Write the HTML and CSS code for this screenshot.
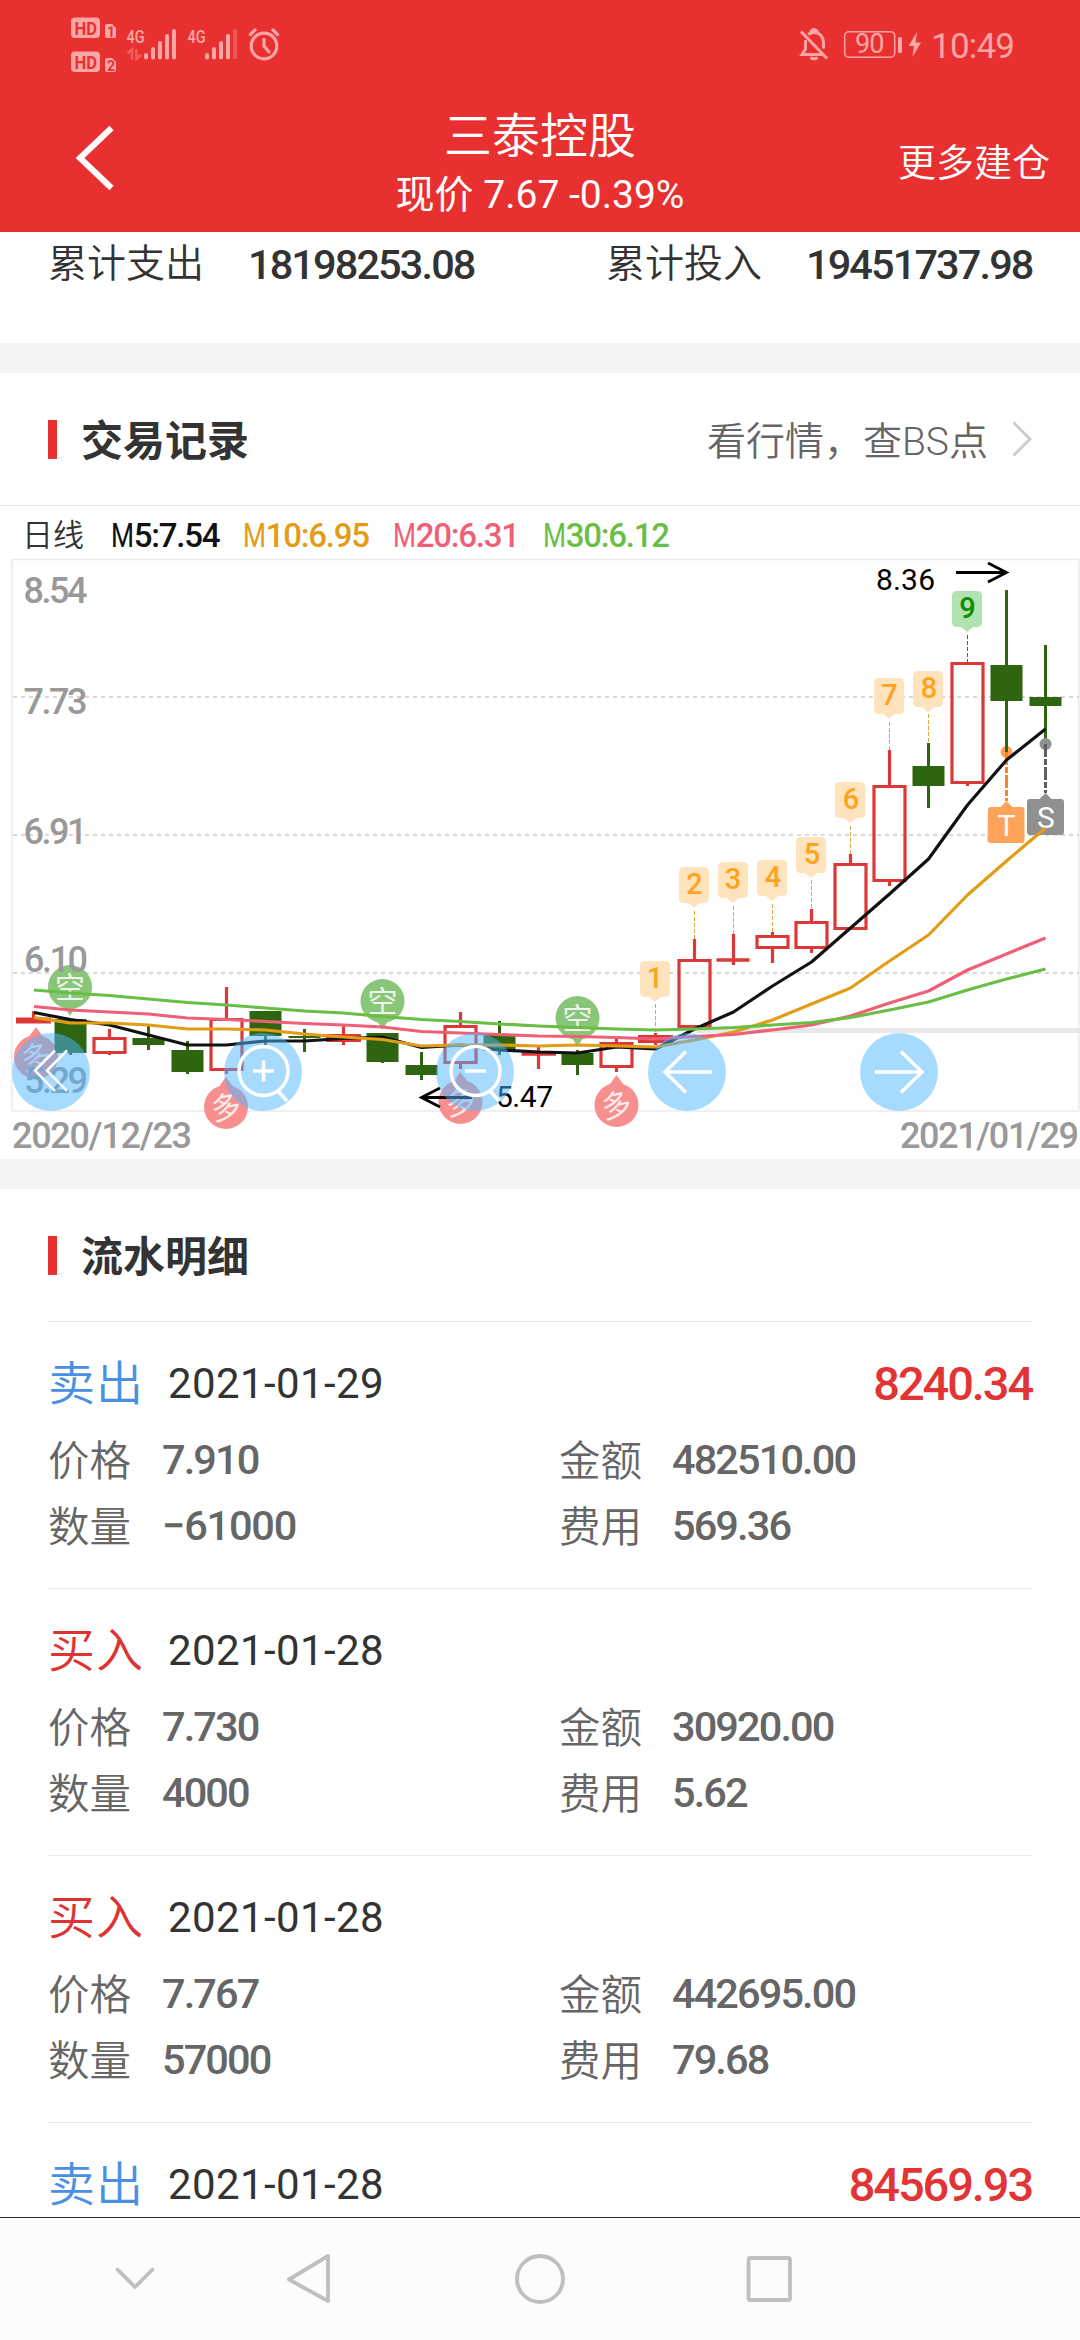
FILE: index.html
```html
<!DOCTYPE html>
<html lang="zh-CN">
<head>
<meta charset="utf-8">
<title>三泰控股</title>
<link rel="stylesheet" href="styles.css">
</head>
<body>
<div class="screen">
  <header class="header">
    <svg class="status" viewBox="0 0 1080 80" width="1080" height="80">
      <g fill="#fca5a5">
        <rect x="71" y="17.5" width="29" height="20.5" rx="4"/>
        <rect x="71" y="51.500" width="29" height="20.5" rx="4"/>
        <path d="M105 26q0-2 2-2h5l4 4v8q0 2-2 2h-7q-2 0-2-2z"/>
        <path d="M105 60q0-2 2-2h5l4 4v8q0 2-2 2h-7q-2 0-2-2z"/>
      </g>
      <g class="hd">
        <text x="74.500" y="34.500" textLength="22.500" lengthAdjust="spacingAndGlyphs">HD</text>
        <text x="74.500" y="68.500" textLength="22.500" lengthAdjust="spacingAndGlyphs">HD</text>
        <text class="sim" x="107" y="36.500">1</text>
        <text class="sim" x="107" y="70.500">2</text>
      </g>
      <g class="net">
        <text x="126.500" y="42.500" textLength="18" lengthAdjust="spacingAndGlyphs">4G</text>
        <text x="187.500" y="42.500" textLength="18" lengthAdjust="spacingAndGlyphs">4G</text>
      </g>
      <path d="M127.500 53.500l4.500-4v10M136.500 49v10l4.500-4" fill="none" stroke="#f05c5c" stroke-width="2.600"/>
      <g stroke="#fca5a5" stroke-width="4" stroke-linecap="round">
        <path d="M146 55v2.500M153 49v8.500M160 43v14.500M167 36v21.500M174 31v26.500"/>
        <path d="M207 55v2.500M214 49v8.500M221 43v14.500M228 36v21.500"/>
        <path d="M235 31v26.500" stroke="#f05858"/>
      </g>
      <g fill="none" stroke="#fca5a5" stroke-width="3.200" stroke-linecap="round">
        <circle cx="264" cy="46" r="12.800"/>
        <path d="M264 39v7l5 6M250.500 34.500l4.500-4.500M277.500 34.500l-4.500-4.500"/>
      </g>
      <g fill="none" stroke="#fca5a5" stroke-width="3">
        <path d="M801 31.500l26 27M805.500 40v9l-3.500 5.500h20M808 34.500c2-1.500 4-2 6-2 6 0 9.500 4.500 9.500 10v6M811 32.500v-1.500q3-3 6 0v1.500"/>
        <path d="M810.500 57.500q3.500 2.500 7 0" />
        <rect x="844.700" y="31.700" width="50" height="25.500" rx="4" stroke-width="1.500"/>
      </g>
      <rect x="898" y="37" width="4" height="16" rx="1.500" fill="#fca5a5"/>
      <path d="M917 32l-8.500 14h5.500l-1.500 11 8.500-14.500h-5.500z" fill="#fca5a5"/>
      <text class="batt" x="855" y="53" textLength="29.500">90</text>
      <text class="time" x="931" y="57.500" textLength="84">10:49</text>
    </svg>
    <div class="bar">
      <svg class="back" viewBox="0 0 40 66" width="40" height="66"><path d="M36.500 3L5 33l31.500 30" fill="none" stroke="#fff" stroke-width="6"/></svg>
      <div class="heading">
        <h1>三泰控股</h1>
        <p>现价 7.67 -0.39%</p>
      </div>
      <a class="more">更多建仓</a>
    </div>
  </header>

  <section class="totals">
    <span class="t-label">累计支出</span><span class="num">18198253.08</span>
    <span class="t-label second">累计投入</span><span class="num">19451737.98</span>
  </section>

  <section class="trades">
    <div class="section-head">
      <i class="mark"></i><h2>交易记录</h2>
      <span class="link">看行情，查BS点</span>
      <svg class="chev" viewBox="0 0 20 36" width="20" height="36"><path d="M1.500 1.500L18 18 1.500 34.500" fill="none" stroke="#ccc" stroke-width="3"/></svg>
    </div>
    <div class="legend">
      <span class="period">日线</span>
      <span class="m5"><i>M</i>5:7.54</span>
      <span class="m10"><i>M</i>10:6.95</span>
      <span class="m20"><i>M</i>20:6.31</span>
      <span class="m30"><i>M</i>30:6.12</span>
    </div>
    <svg class="chart" viewBox="0 558 1080 601" width="1080" height="601">
      <defs>
        <path id="tag" d="M-15-31q0-5 5-5h20q5 0 5 5v26q0 5-5 5h-4l-6 5-6-5h-4q-5 0-5-5z"/>
        <g id="short"><path d="M-6 19L0 29l6-10z"/><circle r="22"/></g>
        <g id="long"><path d="M-8-19L0-30l8 11z"/><circle r="22"/></g>
      </defs>
      <g fill="none" stroke="#ececec" stroke-width="1.600">
        <path d="M12 559.500H1079M12 1111H1079M12 559V1111M1078.800 559V1111"/>
      </g>
      <path d="M696 1030.500H1080" stroke="#e8e8e8" stroke-width="5"/>
      <path d="M13 697H1079M13 835H1079M13 973H1079" stroke="#d8d8d8" stroke-width="1.800" stroke-dasharray="4 4"/>

      <g fill="#8ac67a">
        <use href="#short" x="70" y="987"/><use href="#short" x="382.500" y="1001"/><use href="#short" x="577.500" y="1018"/>
      </g>
      <g fill="#f78f8f">
        <use href="#long" x="36" y="1057"/><use href="#long" x="226" y="1107"/><use href="#long" x="460.500" y="1102"/><use href="#long" x="616.500" y="1105"/>
      </g>
      <g class="pin">
        <text x="70" y="998">空</text><text x="382.500" y="1012">空</text><text x="577.500" y="1029">空</text>
        <text transform="translate(36 1057) rotate(-12)" y="11">多</text>
        <text transform="translate(226 1107) rotate(-12)" y="11">多</text>
        <text transform="translate(460.500 1102) rotate(-12)" y="11">多</text>
        <text transform="translate(616.500 1105) rotate(-12)" y="11">多</text>
      </g>

      <g stroke="#2f6511" stroke-width="3" fill="#2f6511">
        <path d="M70.500 1019V1055M148.500 1026V1050M187.500 1041V1074M265.500 1011V1045M304.500 1029V1052M382.500 1033V1063M421.500 1052V1080M499.500 1021V1055M577.500 1050V1075M928.500 743V808M1006.500 590V752M1045.500 645V743"/>
        <path stroke="none" d="M54.500 1019h32v34h-32zM132.500 1038h32v7h-32zM171.500 1050h32v22h-32zM249.500 1011h32v25h-32zM288.500 1036h32v2h-32zM366.500 1033h32v29h-32zM405.500 1065h32v10h-32zM483.500 1035h32v16h-32zM561.500 1053h32v12h-32zM912.500 766h32v20h-32zM990.500 665h32v36h-32zM1029.500 697h32v9h-32z"/>
      </g>
      <g stroke="#dc3838" stroke-width="3.200" fill="none">
        <path d="M33.500 1011V1020M109.500 1029V1038M109.500 1053V1055M226.500 987V1019M226.500 1071V1074M343.500 1025V1045M460.500 1012V1026M460.500 1063V1069M538.500 1047V1069M616.500 1036V1043M616.500 1068V1072M655.500 1033V1045M694.500 939V960M733.500 934V965M772.500 932V936M772.500 949V963M811.500 909V922M811.500 949V953M850.500 854V864M889.500 750V786M889.500 882V886M967.500 784V786"/>
        <path stroke-width="6" d="M16 1020.500H51"/>
        <path stroke-width="8" d="M326 1038H361M638 1039H673"/>
        <path stroke-width="3.500" d="M521.500 1054H556M716.500 960H749.500"/>
        <path d="M94 1038.500h31v14h-31zM211 1019.500h31v50h-31zM445 1026.500h31v36h-31zM601 1043.500h31v23h-31zM679 960.500h31v66h-31zM757 936.500h31v11h-31zM796 922.500h31v25h-31zM835 864.500h31v64h-31zM874 786.500h31v94h-31zM952 663.500h31v119h-31z"/>
      </g>

      <g fill="#ffe1b8" fill-opacity=".94">
        <use href="#tag" x="655" y="997"/><use href="#tag" x="694" y="903"/><use href="#tag" x="733" y="898"/><use href="#tag" x="772" y="896"/><use href="#tag" x="811" y="873"/><use href="#tag" x="850" y="818"/><use href="#tag" x="889" y="714"/><use href="#tag" x="928" y="707"/>
      </g>
      <use href="#tag" x="967" y="627" fill="#b2e1b2"/>
      <g class="count">
        <text x="655" y="988">1</text><text x="694.500" y="894">2</text><text x="733" y="889">3</text><text x="773" y="887">4</text><text x="812" y="864">5</text><text x="851" y="809">6</text><text x="889.500" y="705">7</text><text x="929" y="698">8</text><text class="nine" x="967.500" y="618">9</text>
      </g>
      <path d="M655.500 1004V1033M694.500 911V939M733.500 906V934M772.500 904V932M811.500 880V909M850.500 826V854M889.500 722V750M928.500 714V743" stroke="#dfa43a" stroke-dasharray="4 2"/>
      <path d="M967.500 635V662" stroke="#128a12" stroke-dasharray="4 2"/>

      <g>
        <circle cx="1006.500" cy="752" r="6" fill="#ffa35b"/><circle cx="1045.500" cy="744" r="6" fill="#909090"/>
        <path d="M1006.500 590V752" stroke="#2f6511" stroke-width="3"/>
        <path d="M1006.500 752V801" stroke="#f98524" stroke-width="3" stroke-dasharray="13 2 6 2"/>
        <path d="M1045.500 744V793" stroke="#606060" stroke-width="3" stroke-dasharray="13 2 6 2"/>
        <path d="M988 810q0-3 3-3h9.500l6-6 6 6h9q3 0 3 3v30q0 3-3 3h-31q-3 0-3-3z" fill="#ffa35b"/>
        <path d="M1027 802q0-3 3-3h9.500l6-6 6 6h9.500q3 0 3 3v30q0 3-3 3h-31q-3 0-3-3z" fill="#909090"/>
        <text class="ts" x="1006.500" y="835.500">T</text><text class="ts" x="1046" y="828">S</text>
      </g>

      <g class="axis">
        <text x="23.500" y="602.500" textLength="64">8.54</text>
        <text x="23.500" y="714" textLength="64">7.73</text>
        <text x="23.500" y="843.500" textLength="64">6.91</text>
        <text x="24" y="972" textLength="64">6.10</text>
        <text x="24" y="1093" textLength="64">5.29</text>
        <text x="12" y="1148" textLength="180">2020/12/23</text>
        <text x="900" y="1148" textLength="179">2021/01/29</text>
      </g>

      <g fill="none" stroke-width="3.200" stroke-linejoin="round">
        <path stroke="#111" d="M34 1012.500L70.500 1019.500 109.500 1025 148.500 1035 187.500 1045 226.500 1045 265.500 1041 304.500 1041 343.500 1038.500 382.500 1037 421.500 1047.500 460.500 1045 499.500 1050 538.500 1052 577.500 1053 616.500 1047 655.500 1049 694.500 1029 733.500 1012 772.500 986 811.500 962 850.500 928 889.500 894 928.500 859 967.500 805 1006.500 760 1045.500 729"/>
        <path stroke="#e39c16" d="M34 1017.500L70.500 1023 109.500 1023 148.500 1025 187.500 1029 226.500 1029 265.500 1030 304.500 1034 343.500 1037 382.500 1039.500 421.500 1046 460.500 1045 499.500 1045 538.500 1046 577.500 1045 616.500 1046 655.500 1047 694.500 1040 733.500 1032 772.500 1020 811.500 1004 850.500 988 889.500 961 928.500 935 967.500 895 1006.500 861 1045.500 828"/>
        <path stroke="#ef5f76" d="M34 1006.500L70.500 1010 109.500 1012 148.500 1014 187.500 1018 226.500 1019.500 265.500 1021.500 304.500 1023.500 343.500 1025 382.500 1027 421.500 1031.500 460.500 1033 499.500 1034.500 538.500 1036 577.500 1036.500 616.500 1037.500 655.500 1039 694.500 1036.500 733.500 1034.500 772.500 1030 811.500 1025 850.500 1016 889.500 1003 928.500 991 967.500 970 1006.500 954 1045.500 938"/>
        <path stroke="#6bbe45" d="M34 990L70.500 993 109.500 995.500 148.500 999 187.500 1002.500 226.500 1005 265.500 1008 304.500 1011 343.500 1013 382.500 1016.500 421.500 1019.500 460.500 1021.500 499.500 1024 538.500 1026 577.500 1027.500 616.500 1029 655.500 1030 694.500 1029 733.500 1027.500 772.500 1025 811.500 1022.500 850.500 1017.500 889.500 1010 928.500 1002 967.500 990 1006.500 979 1045.500 969"/>
      </g>
      <path d="M956 572.500H1006M988 563l18.500 9.500L988 582M472 1097.500H422M440 1088l-18.500 9.500 18.500 9.500" fill="none" stroke="#000" stroke-width="2.800"/>
      <g class="peak"><text x="876" y="590" textLength="59">8.36</text><text x="496" y="1107" textLength="57">5.47</text></g>

      <g fill="#4fb5ff" fill-opacity=".5">
        <circle cx="51" cy="1072" r="39"/><circle cx="263" cy="1072" r="39"/><circle cx="475" cy="1072" r="39"/><circle cx="687" cy="1072" r="39"/><circle cx="899" cy="1072" r="39"/>
      </g>
      <g fill="none" stroke="#fff" stroke-width="3.500">
        <path stroke-width="2.500" d="M55 1050.500L35 1070.500l20 20.500M67 1050.500L47 1070.500l20 20.500"/>
        <circle cx="263.500" cy="1071" r="24.500"/><path d="M253 1071h21M263.500 1060.500v21M278 1091l9 10"/>
        <circle cx="475.500" cy="1071" r="24.500"/><path d="M465 1071h21M490 1091l9 10"/>
        <path d="M712 1072H665M686 1051.500L665 1072l21 20.500M875 1072H922M901 1051.500l21 20.500-21 20.500"/>
      </g>
    </svg>
  </section>

  <section class="details">
    <div class="section-head"><i class="mark"></i><h2>流水明细</h2></div>
    <article class="record">
      <div class="top"><b class="sell">卖出</b><time>2021-01-29</time><strong>8240.34</strong></div>
      <dl><dt>价格</dt><dd>7.910</dd><dt>金额</dt><dd>482510.00</dd><dt>数量</dt><dd class="neg">−61000</dd><dt>费用</dt><dd>569.36</dd></dl>
    </article>
    <article class="record">
      <div class="top"><b class="buy">买入</b><time>2021-01-28</time></div>
      <dl><dt>价格</dt><dd>7.730</dd><dt>金额</dt><dd>30920.00</dd><dt>数量</dt><dd>4000</dd><dt>费用</dt><dd>5.62</dd></dl>
    </article>
    <article class="record">
      <div class="top"><b class="buy">买入</b><time>2021-01-28</time></div>
      <dl><dt>价格</dt><dd>7.767</dd><dt>金额</dt><dd>442695.00</dd><dt>数量</dt><dd>57000</dd><dt>费用</dt><dd>79.68</dd></dl>
    </article>
    <article class="record">
      <div class="top"><b class="sell">卖出</b><time>2021-01-28</time><strong>84569.93</strong></div>
    </article>
  </section>

  <nav class="nav">
    <svg viewBox="0 0 1080 122" width="1080" height="122" fill="none" stroke="#bfbfbf" stroke-width="3.800" stroke-linejoin="round" stroke-linecap="round">
      <path d="M117.500 51.500L135 69l17.500-17.500M328 38v45L289 61.500z"/>
      <circle cx="540" cy="61" r="23"/>
      <rect x="748.500" y="40" width="41.500" height="42" rx="2"/>
    </svg>
  </nav>
</div>
</body>
</html>
```
FILE: styles.css
```css
* { box-sizing: border-box; margin: 0; padding: 0; }
body { background: #fff; font-family: Roboto, "Noto Sans CJK SC", sans-serif; color: #333; }
i { font-style: normal; }
.screen { width: 1080px; height: 2340px; overflow: hidden; display: flex; flex-direction: column; }
.status, .back, .chev, .chart, .nav svg { display: block; flex: none; }

.header { height: 232px; flex: none; background: #e93030; color: #fff; }
.hd text { font-size: 18px; font-weight: 700; fill: #e93030; }
.hd .sim { font-size: 14px; }
.net text { font-size: 19px; font-weight: 500; fill: #fca5a5; }
.batt { font-size: 27px; fill: #fca5a5; }
.time { font-size: 35px; fill: #fca5a5; }
.bar { height: 152px; display: grid; grid-template-columns: 240px 1fr 240px; align-items: center; }
.back { margin-left: 75px; margin-top: 3px; }
.heading { text-align: center; padding-top: 18px; }
.heading h1 { font-size: 48px; font-weight: 350; line-height: 60px; }
.heading p { font-size: 39px; line-height: 56px; font-weight: 400; }
.heading p, .heading h1 { white-space: nowrap; }
.more { font-size: 38px; font-weight: 350; justify-self: end; margin-right: 30px; margin-top: 6px; }

.totals { height: 111px; flex: none; display: flex; padding: 0 48px; line-height: 65px; }
.t-label { font-size: 39px; font-weight: 350; width: 200px; }
.t-label.second { margin-left: 136px; }
.num { font-size: 41.500px; font-weight: 500; letter-spacing: -1.900px; width: 222px; white-space: nowrap; }

.trades { border-top: 30px solid #f4f4f4; flex: none; }
.section-head { height: 132px; display: flex; align-items: center; padding: 0 48px; }
.mark { width: 9px; height: 39px; background: #e93030; }
.section-head h2 { font-size: 42px; font-weight: 700; margin-left: 24px; line-height: 60px; padding-top: 5px; }
.link { margin-left: auto; font-size: 39px; font-weight: 350; color: #666; margin-top: -3px; }
.chev { margin-left: 24px; }
.trades .section-head { border-bottom: 1px solid #ececec; height: 133px; }
.legend { height: 52px; display: flex; padding-left: 22px; font-size: 33px; line-height: 60px; font-weight: 500; letter-spacing: -1.200px; white-space: nowrap; }
.legend i { font-weight: 400; display: inline-block; transform: scaleX(.8); transform-origin: left; margin-right: -5px; }
.period { font-size: 31px; width: 89px; font-weight: 350; letter-spacing: 0; }
.m5 { width: 132px; color: #111; }
.m10 { width: 150px; color: #e39c16; }
.m20 { width: 150px; color: #ef5f76; }
.m30 { color: #6bbe45; }

.pin text { font-size: 30px; fill: #fff; fill-opacity: .85; text-anchor: middle; }
.count text { font-size: 29px; font-weight: 500; fill: #ffa21f; text-anchor: middle; }
.count .nine { fill: #0a9000; }
.ts { font-size: 30px; fill: #fff; text-anchor: middle; }
.axis text { font-size: 36px; font-weight: 500; fill: #999; }
.peak text { font-size: 30px; fill: #000; }

.details { border-top: 30px solid #f4f4f4; height: 1058px; overflow: hidden; flex: none; }
.record { height: 267px; margin: 0 48px; border-top: 1px solid #ececec; padding-top: 30px; }
.top { display: flex; align-items: center; height: 62px; }
.top b { font-size: 47px; font-weight: 350; width: 120px; letter-spacing: 1px; margin-top: -7px; }
.sell { color: #4a90e2; }
.buy { color: #dd3333; }
.top time { font-size: 42px; letter-spacing: .4px; }
.top strong { margin-left: auto; font-size: 47px; font-weight: 500; color: #e23434; letter-spacing: -2.100px; }
.record dl { margin-top: 12px; display: grid; grid-template-columns: 114px 397px 113px 1fr; grid-auto-rows: 66px; align-items: center; color: #666; }
.record dt { font-size: 41.500px; font-weight: 350; margin-top: -3px; }
.record dd { font-size: 41.500px; font-weight: 500; letter-spacing: -1.900px; }
.record .neg { letter-spacing: -1.200px; }

.nav { height: 123px; flex: none; background: #fcfcfc; border-top: 1px solid #302c2c; }
```
